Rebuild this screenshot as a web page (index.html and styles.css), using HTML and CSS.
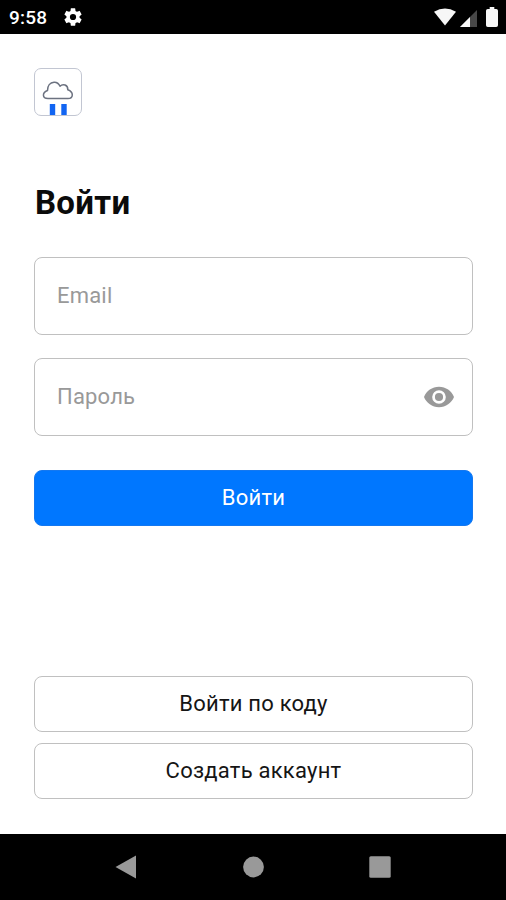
FILE: index.html
```html
<!DOCTYPE html>
<html lang="ru">
<head>
<meta charset="utf-8">
<meta name="viewport" content="width=device-width, initial-scale=1">
<title>Войти</title>
<link rel="stylesheet" href="styles.css">
</head>
<body>
<div class="screen">
  <header class="status-bar">
    <span class="clock">9:58</span>
    <svg class="gear" viewBox="0 0 24 24"><path d="M19.14 12.94c.04-.3.06-.61.06-.94 0-.32-.02-.64-.07-.94l2.03-1.58a.49.49 0 0 0 .12-.61l-1.92-3.32a.488.488 0 0 0-.59-.22l-2.39.96c-.5-.38-1.03-.7-1.62-.94l-.36-2.54a.484.484 0 0 0-.48-.41h-3.84c-.24 0-.43.17-.47.41l-.36 2.54c-.59.24-1.13.57-1.62.94l-2.39-.96c-.22-.08-.47 0-.59.22L2.74 8.87c-.12.21-.08.47.12.61l2.03 1.58c-.05.3-.09.63-.09.94s.02.64.07.94l-2.03 1.58a.49.49 0 0 0-.12.61l1.92 3.32c.12.22.37.29.59.22l2.39-.96c.5.38 1.03.7 1.62.94l.36 2.54c.05.24.24.41.48.41h3.84c.24 0 .44-.17.47-.41l.36-2.54c.59-.24 1.13-.56 1.62-.94l2.39.96c.22.08.47 0 .59-.22l1.92-3.32c.12-.22.07-.47-.12-.61l-2.01-1.58zM12 15.4A3.4 3.4 0 1 1 12 8.6a3.4 3.4 0 0 1 0 6.8z"/></svg>
    <div class="indicators">
      <svg class="wifi" viewBox="0 0 22 18"><path d="M0 3.8Q11-3 22 3.8L11 17.5z"/></svg>
      <svg class="signal" viewBox="0 0 17 17"><path class="signal-empty" d="M0 17 17 0V17z"/><path d="M0 17 10 7V17z"/></svg>
      <svg class="battery" viewBox="0 0 12 20"><path d="M3.7 0h4.6v2h1.9Q12 2 12 3.8v14.4Q12 20 10.2 20H1.8Q0 20 0 18.2V3.8Q0 2 1.8 2h1.9z"/></svg>
    </div>
  </header>
  <main class="content">
    <div class="logo">
      <svg viewBox="0 0 48 48"><path class="cloud" d="M14 30.5C8 30.500 8 24.500 13.500 22.500C13.500 18 16 14.500 20 14.200C22.500 14 24.500 15 26 18.200C29 15.200 34 17 33.800 21.700C40 24 39.500 30.500 34 30.500Z"/><path class="bars" d="M15.800 36h5.400v11h-5.400zM27.300 36h5.400v11h-5.400z"/></svg>
    </div>
    <h1 class="title">Войти</h1>
    <form class="form">
      <div class="field"><span class="placeholder">Email</span></div>
      <div class="field"><span class="placeholder">Пароль</span>
        <svg class="eye" viewBox="1 4 22 16"><path d="M12 4.500C7 4.500 2.730 7.610 1 12c1.730 4.390 6 7.500 11 7.500s9.270-3.110 11-7.500c-1.730-4.390-6-7.500-11-7.500zM12 17a5 5 0 1 1 0-10 5 5 0 0 1 0 10zm0-8a3 3 0 1 0 0 6 3 3 0 0 0 0-6z"/></svg>
      </div>
      <button class="button primary" type="button">Войти</button>
    </form>
    <div class="actions">
      <button class="button" type="button">Войти по коду</button>
      <button class="button" type="button">Создать аккаунт</button>
    </div>
  </main>
  <nav class="nav-bar">
    <svg viewBox="0 0 24 24"><path d="M1.500 12 22 .5v23z"/></svg>
    <svg viewBox="0 0 24 24"><circle cx="12.500" cy="12" r="10.400"/></svg>
    <svg viewBox="0 0 24 24"><rect x="1.300" y="1.300" width="21.400" height="21.400" rx="1.500"/></svg>
  </nav>
</div>
</body>
</html>
```
FILE: styles.css
```css
* { box-sizing: border-box; }
body { margin: 0; background: #fff; font-family: Roboto, "Liberation Sans", sans-serif; color: #0b0b0b; }
svg { display: block; flex: none; }
.screen { height: 900px; display: flex; flex-direction: column; }
.status-bar { height: 34px; flex: none; background: #000; display: flex; align-items: center; padding: 0 8px 0 9px; }
.clock { color: #fff; font-size: 19px; font-weight: 500; letter-spacing: .25px; line-height: 24px; width: 53px; padding-top: 2px; }
.gear { width: 22px; height: 22px; fill: #fff; }
.indicators { margin-left: auto; display: flex; align-items: center; fill: #f7f7f7; }
.wifi { width: 22px; height: 18px; margin-right: 4px; }
.signal { width: 17px; height: 17px; margin: 2px 9px 0 0; }
.signal-empty { fill: #484848; }
.battery { width: 12px; height: 20px; }
.content { flex: 1; padding: 34px 33px 35px 34px; display: flex; flex-direction: column; }
.logo { width: 48px; height: 48px; border: 1px solid #c2c6d2; border-radius: 7px; }
.logo svg { width: 48px; height: 48px; margin: -1px; }
.cloud { fill: none; stroke: #6c7280; stroke-width: 1.500; stroke-linejoin: round; }
.bars { fill: #1265f2; }
.title { margin: 65px 0 0; height: 76px; padding-left: 1px; font-size: 33px; letter-spacing: .3px; line-height: 44px; font-weight: 700; }
.form { display: flex; flex-direction: column; }
.field { height: 78px; margin-bottom: 23px; border: 1px solid #c0c0c0; border-radius: 8px; display: flex; align-items: center; justify-content: space-between; padding: 0 18px 0 22px; color: #999; font-size: 22px; letter-spacing: .2px; }
.placeholder { padding-bottom: 2px; }
.eye { width: 30px; height: 22px; margin-bottom: 1px; fill: #999; }
.button { display: flex; align-items: center; justify-content: center; width: 100%; height: 56px; padding: 0; border: 1px solid #c0c0c0; border-radius: 8px; background: #fff; color: #151515; font: 400 22px/28px Roboto, "Liberation Sans", sans-serif; letter-spacing: .23px; }
.primary { margin-top: 11px; background: #0077ff; color: #fff; border: 1px solid #1478f0; }
.actions { margin-top: auto; display: flex; flex-direction: column; gap: 11px; }
.nav-bar { height: 66px; flex: none; background: #000; display: flex; justify-content: space-between; align-items: center; padding: 0 114px; fill: #999; }
.nav-bar svg { width: 24px; height: 24px; }
```
